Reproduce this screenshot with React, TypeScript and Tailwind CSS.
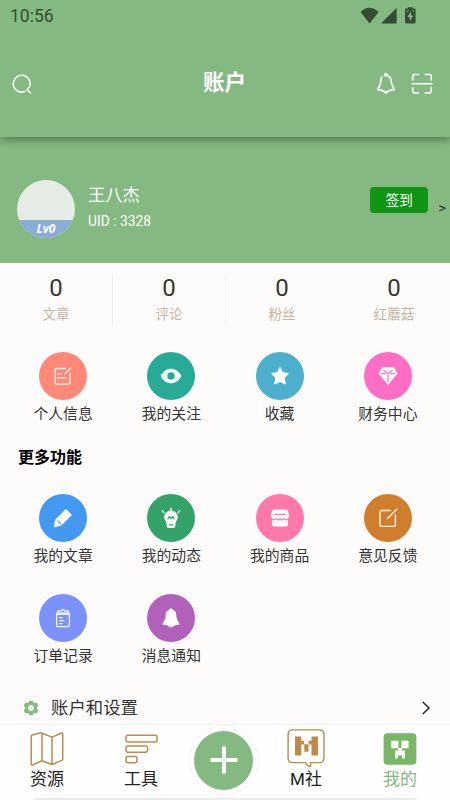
import clsx from "clsx";
import type { ReactNode } from "react";

interface ShortcutType {
  label: string;
  color: string;
  icon: ReactNode;
}

const SearchIcon = () => (
  <svg width="20" height="20" viewBox="0 0 20 20" fill="none" stroke="#fff" strokeWidth="1.5">
    <path d="M13.6 17.1A8.4 8.4 0 1 1 17.3 13.2L15 15.7L19 19.2" strokeLinejoin="round" />
  </svg>
);

const BellIcon = () => (
  <svg width="18" height="23" viewBox="0 0 18 23" fill="none" stroke="#fff" strokeWidth="1.6" strokeLinecap="round">
    <path d="M4.8 4.6C3.8 6.3 3.9 9 3.5 11.3C3 13.8 1.2 14.6 1 17.6C3.5 17.6 5 18.3 5.6 18.8C7.5 20 10.5 20 12.4 18.8C13 18.3 14.5 17.6 17 17.6C16.8 14.6 15 13.8 14.5 11.3C13.9 8 14.6 5.4 11.1 4" />
    <path d="M7.4 3.6C6.4 .4 11.4 .4 10.6 3.6ZM7.2 20.1C8 22.3 10 22.3 10.8 20.1Z" fill="#fff" strokeWidth="1" />
  </svg>
);

const ScanIcon = () => (
  <svg width="22" height="22" viewBox="0 0 22 22" fill="none" stroke="#fff" strokeWidth="1.6" strokeLinecap="round">
    <path d="M1.7 7V3.5Q1.7 1.5 3.7 1.5H7.5M14.3 1.5H18.2Q20.2 1.5 20.2 3.5V7M1.7 14.5V18Q1.7 20 3.7 20H7.5M14.3 20H18.2Q20.2 20 20.2 18V14.5M1.2 10.8H20.8" />
  </svg>
);

const StatusIcons = () => (
  <svg width="56" height="17" viewBox="0 0 56 17" fill="#344d31">
    <path d="M.5 5Q9.5-3.5 18.7 5L9.6 16.4Z" />
    <path d="M36.6 1V16.6H21Z" />
    <path
      fillRule="evenodd"
      d="M47.8 1.6V.2H52.9V1.6H54.2Q55.6 1.6 55.6 3V15Q55.6 16.6 54 16.6H46.6Q45 16.6 45 15V3Q45 1.6 46.4 1.6ZM51 4.3L47.4 10H49.7V14.2L53.2 8.5H51Z"
    />
    <path d="M46.6 4.4L48.6 3.6M52.2 3.6L54 4.4" stroke="#85b982" strokeWidth="1" />
  </svg>
);

const NoteIcon = () => (
  <svg width="20" height="20" viewBox="0 0 20 20" fill="none" stroke="#fff" strokeWidth="1.3" strokeLinecap="round" strokeLinejoin="round" strokeOpacity=".9">
    <path d="M12.5 2.5H3.6Q2 2.5 2 4.1V16.5Q2 18.1 3.6 18.1H15.4Q17 18.1 17 16.5V7.3M11.9 7.7L18 1.6M4.8 7.7H8.8M4.8 11.9H13" />
  </svg>
);

const EyeIcon = () => (
  <svg width="22" height="16" viewBox="0 0 22 16">
    <path d="M.6 8C3.2 3.2 6.8.7 11 .7S18.8 3.2 21.4 8C18.8 12.8 15.2 15.3 11 15.3S3.2 12.8.6 8Z" fill="#fff" />
    <circle cx="11" cy="8" r="3.7" fill="#28ab96" />
  </svg>
);

const StarIcon = () => (
  <svg width="20" height="20" viewBox="0 0 20 20" fill="#fff" stroke="#fff" strokeWidth="1" strokeLinejoin="round">
    <path d="M10 1.3L12.6 6.7L18.6 7.5L14.3 11.8L15.3 18L10 15.4L4.7 18L5.7 11.8L1.4 7.5L7.4 6.7Z" />
  </svg>
);

const DiamondIcon = () => (
  <svg width="20" height="20" viewBox="0 0 20 20">
    <path d="M4.2 1.7H15.8L19 7.4L10 18.4L1 7.4Z" fill="#fff" stroke="#fff" strokeWidth=".8" strokeLinejoin="round" />
    <path d="M3.5 7.6H7.3M12.7 7.6H16.5M5.8 4.4L10 7.5L14.2 4.4M10 7.5V15.7" fill="none" stroke="#ff6ec4" strokeWidth="1.2" strokeLinecap="round" />
  </svg>
);

const PencilIcon = () => (
  <svg width="20" height="20" viewBox="0 0 20 20">
    <path d="M12.9 1.4L18.5 6.9L8.5 16.9L1.3 19L2.5 11.8Z" fill="#fff" stroke="#fff" strokeWidth=".8" strokeLinejoin="round" />
    <path d="M4.4 12.6L7.8 15.8" stroke="#4398f0" strokeWidth="1.2" />
  </svg>
);

const BulbIcon = () => (
  <svg width="20" height="22" viewBox="0 0 20 22">
    <path d="M10 3.6A6.8 6.8 0 0 1 16.8 10.2C16.8 13 14.7 14.3 14.4 16.5V18.8Q14.4 21 12 21H8Q5.6 21 5.6 18.8V16.5C5.3 14.3 3.2 13 3.2 10.2A6.8 6.8 0 0 1 10 3.6Z" fill="#fff" />
    <path d="M10 1.3V3.6M1.4 3.8L3 5.8M18.6 3.8L17 5.8" stroke="#fff" strokeWidth="1.3" strokeLinecap="round" />
    <path d="M7 11.8L8.3 9.5L10 11.4L11.7 9.5L13 11.8M8.3 17.9H11.7" fill="none" stroke="#33a36a" strokeWidth="1.3" strokeLinejoin="round" strokeLinecap="round" />
  </svg>
);

const ShopIcon = () => (
  <svg width="20" height="18" viewBox="0 0 20 18">
    <path d="M3.8.5H16.2Q17.5.5 18 2L19 6.3C19.3 9 17.4 10.2 15.6 10.2L14 9L12 10.2L10 9L8 10.2L6 9L4.4 10.2C2.6 10.2.7 9 1 6.3L2 2Q2.5.5 3.8.5Z" fill="#fff" />
    <path d="M2 11.3L4.3 11.6L6.1 10.6L8 11.7L10 10.6L12 11.7L13.9 10.6L15.7 11.6L18 11.3V15.4Q18 17.5 15.9 17.5H4.1Q2 17.5 2 15.4Z" fill="#fff" />
    <path d="M4.8 5.6H15.2" stroke="#ff78aa" strokeWidth="1.4" strokeLinecap="round" />
  </svg>
);

const FeedbackIcon = () => (
  <svg width="20" height="20" viewBox="0 0 20 20" fill="none" stroke="#fff" strokeWidth="1.4" strokeLinecap="round" strokeLinejoin="round" strokeOpacity=".9">
    <path d="M12.3 2.5H3.6Q2 2.5 2 4.1V16.8Q2 18.4 3.6 18.4H15.8Q17.4 18.4 17.4 16.8V6.8M9.5 10.5L18.8 1.2" />
  </svg>
);

const OrderIcon = () => (
  <svg width="16" height="20" viewBox="0 0 16 20" fill="none" stroke="#fff" strokeWidth="1.3" strokeLinecap="round" strokeLinejoin="round" strokeOpacity=".9">
    <path d="M2.6 4.8H13.4Q14.4 4.8 14.4 6V17Q14.4 18.7 12.7 18.7H3.3Q1.6 18.7 1.6 17V6Q1.6 4.8 2.6 4.8ZM1.7 6.4H14.3M2.9 2.8H6.3Q8 .2 9.7 2.8H13.1V4.8M2.9 2.8V4.8M4.7 9.6H7M4.7 12.6H9M4.7 15.6H7" />
  </svg>
);

const NoticeIcon = () => (
  <svg width="18" height="20" viewBox="0 0 18 20">
    <path d="M9 .4C10 .4 10.8 1 11 1.9C14.5 3 14.2 6 14.5 9C14.8 13 17 13.2 17.5 16.6C15.6 16.8 13.5 17.2 12 17.8C11 20.1 7 20.1 6 17.8C4.5 17.2 2.4 16.8.5 16.6C1 13.2 3.2 13 3.5 9C3.8 6 3.5 3 7 1.9C7.2 1 8 .4 9 .4Z" fill="#fff" />
    <path d="M8.2 18.2H9.8" stroke="#b160bb" strokeWidth=".8" />
  </svg>
);

const GearIcon = () => (
  <svg width="16" height="16" viewBox="0 0 16 16">
    <path
      d="M6.2.7H9.8L10.6 2.9L13.4 2.4L15.2 5.5L13.7 8L15.2 10.5L13.4 13.6L10.6 13.1L9.8 15.3H6.2L5.4 13.1L2.6 13.6L.8 10.5L2.3 8L.8 5.5L2.6 2.4L5.4 2.9Z"
      fill="#85b982"
    />
    <circle cx="8" cy="8" r="2.9" fill="#fefcfb" />
  </svg>
);

const MapIcon = () => (
  <svg width="34" height="34" viewBox="0 0 34 34" fill="none" stroke="#bb8b4b" strokeWidth="1.5" strokeLinejoin="round">
    <path d="M1.2 4.2Q1.2 3.4 2 3.1L11 .8L12 1.2L22 5.1L31.5 1Q32.7 .6 32.7 1.8V27.9L22 32.5L12 28.8L2.4 33Q1.2 33.4 1.2 32.2ZM12 1.2V28.8M22 5.1V32.5" />
  </svg>
);

const ToolsIcon = () => (
  <svg width="33" height="30" viewBox="0 0 33 30" fill="none" stroke="#bb8b4b" strokeWidth="1.5">
    <rect x="1" y="1.3" width="31" height="6.6" rx="2" />
    <rect x="1" y="12" width="21.6" height="6.2" rx="2" />
    <rect x="1" y="22.6" width="11" height="6.1" rx="2" />
  </svg>
);

const ClubIcon = () => (
  <svg width="38" height="39" viewBox="0 0 38 39">
    <path
      d="M5.7.9H32.4Q37 .9 37 5.5V29Q37 33.6 32.4 33.6H23.6V37.4Q21.5 38 18.5 33.6H5.7Q1.1 33.6 1.1 29V5.5Q1.1 .9 5.7 .9Z"
      fill="none"
      stroke="#bb8b4b"
      strokeWidth="1.4"
    />
    <path d="M8 7.5H14.3V11.8H17.2V15.2H21.6V11.8H24.5V7.5H31V26.5H24.5V15.5H21.5V22.8H17.3V15.5H14.3V26.5H8Z" fill="#bb8b4b" />
  </svg>
);

const MineIcon = () => (
  <svg width="34" height="32" viewBox="0 0 34 32">
    <rect x=".6" y=".3" width="32.8" height="31.4" rx="4" fill="#79b666" />
    <path d="M8.2 7.8H15.4V15H18.4V7.8H25.6V15.2H18.8V17.6H22V25.5H19.2V22.6H14.8V25.5H12V17.6H15.2V15.2H8.2Z" fill="#fff" />
  </svg>
);

const stats = ["文章", "评论", "粉丝", "红蘑菇"];

const mainShortcuts: ShortcutType[] = [
  { label: "个人信息", color: "bg-[#ff8879]", icon: <NoteIcon /> },
  { label: "我的关注", color: "bg-[#28ab96]", icon: <EyeIcon /> },
  { label: "收藏", color: "bg-[#4db1cd]", icon: <StarIcon /> },
  { label: "财务中心", color: "bg-[#ff6ec4]", icon: <DiamondIcon /> },
];

const moreShortcuts: ShortcutType[] = [
  { label: "我的文章", color: "bg-[#4398f0]", icon: <PencilIcon /> },
  { label: "我的动态", color: "bg-[#33a36a]", icon: <BulbIcon /> },
  { label: "我的商品", color: "bg-[#ff78aa]", icon: <ShopIcon /> },
  { label: "意见反馈", color: "bg-[#cf7f2b]", icon: <FeedbackIcon /> },
  { label: "订单记录", color: "bg-[#7b91fe]", icon: <OrderIcon /> },
  { label: "消息通知", color: "bg-[#b160bb]", icon: <NoticeIcon /> },
];

const ShortcutGrid = ({ items }: { items: ShortcutType[] }) => (
  <div className="grid grid-cols-4 gap-y-[27px] pr-2 pl-[9px]">
    {items.map((item) => (
      <div key={item.label} className="flex h-[73px] flex-col items-center">
        <div className={clsx("flex size-12 shrink-0 items-center justify-center rounded-full", item.color)}>
          {item.icon}
        </div>
        <span className="mt-0.5 text-[14.8px] leading-6 text-[#333]">{item.label}</span>
      </div>
    ))}
  </div>
);

interface NavItemProps {
  label: string;
  icon: ReactNode;
  active?: boolean;
}

const NavItem = ({ label, icon, active = false }: NavItemProps) => (
  <div className="flex w-[94px] flex-col items-center">
    <div className="flex h-[47px] items-center justify-center">{icon}</div>
    <span className={clsx("-mt-[5px] text-[17px] leading-6", active ? "text-[#85b982]" : "text-[#222]")}>
      {label}
    </span>
  </div>
);

const App = () => {
  return (
    <div className="flex h-[800px] w-[450px] flex-col overflow-hidden bg-[#fefcfb] font-[Roboto,'Noto_Sans_CJK_SC',sans-serif]">
      {/* Header */}
      <header className="z-10 h-[137px] shrink-0 bg-[#85b982] shadow-[0_3px_8px_rgba(0,0,0,0.35)]">
        <div className="flex h-8 items-center justify-between pr-[34px] pl-[10px]">
          <span className="text-[17.5px] leading-8 text-[#344d31]">10:56</span>
          <div className="-mt-[2px]">
            <StatusIcons />
          </div>
        </div>
        <div className="flex h-[102px] items-center pt-px pr-[17px] pl-3">
          <div className="w-[60px]">
            <SearchIcon />
          </div>
          <h1 className="flex-1 text-center text-[21.5px] font-bold text-white">账户</h1>
          <div className="flex items-center gap-4">
            <BellIcon />
            <ScanIcon />
          </div>
        </div>
      </header>

      {/* Profile */}
      <section className="flex h-[126px] shrink-0 items-center bg-[#85b982] pt-[17px] pr-1 pl-[17px] text-white">
        <div className="flex size-[58px] flex-col justify-end overflow-hidden rounded-full bg-[#e5ebe5]">
          <div className="h-[18px] bg-[#8aadd7] text-center font-['Open_Sans'] text-xs leading-[17px] font-bold italic">
            Lv0
          </div>
        </div>
        <div className="mb-[3px] ml-[13px] flex flex-1 flex-col">
          <span className="text-[17.3px] leading-7">王八杰</span>
          <span className="text-[13.8px] leading-6">UID : 3328</span>
        </div>
        <button className="mb-[17px] h-[26px] w-[58px] rounded bg-[#119515] text-[13.5px] leading-[26px]">签到</button>
        <span className="ml-[10px] text-[15px] text-[#333]">&gt;</span>
      </section>

      {/* Stats */}
      <section className="flex h-[89px] shrink-0 pt-[11px]">
        {stats.map((label, index) => (
          <div
            key={label}
            className={clsx(
              "flex h-[52px] flex-1 flex-col items-center",
              index < 2 && "border-r border-[#f5f3f2]",
            )}
          >
            <span className="text-[24px] leading-7 text-[#3a3632]">0</span>
            <span className="text-[13.6px] leading-6 text-[#c4b5a3]">{label}</span>
          </div>
        ))}
      </section>

      <ShortcutGrid items={mainShortcuts} />
      <h2 className="mt-[21px] mb-6 pl-[18px] text-[16px] leading-6 font-bold text-black">更多功能</h2>
      <ShortcutGrid items={moreShortcuts} />

      {/* Settings */}
      <div className="mt-[27px] flex h-7 shrink-0 items-center pr-5 pl-[23px]">
        <GearIcon />
        <span className="ml-3 flex-1 text-[17.4px] leading-7 text-[#333]">账户和设置</span>
        <svg width="8" height="14" viewBox="0 0 8 14" fill="none" stroke="#222" strokeWidth="1.5">
          <path d="M.8 1L7 7L.8 13" />
        </svg>
      </div>

      {/* Bottom navigation */}
      <nav className="mt-auto h-[76px] shrink-0 border-t border-[#f3f2f3] bg-[#fefefe]">
        <div className="flex h-[73px] pr-[3px]">
          <NavItem label="资源" icon={<MapIcon />} />
          <NavItem label="工具" icon={<ToolsIcon />} />
          <div className="flex flex-1 justify-center">
            <div className="flex size-[70px] shrink-0 items-center justify-center rounded-full border border-[#f5f4f5] bg-white">
              <div className="flex size-[59px] items-center justify-center rounded-full bg-[#85b982]">
                <svg width="28" height="28" viewBox="0 0 28 28" stroke="#fff" strokeWidth="4" strokeLinecap="round">
                  <path d="M14 2V26M2 14H26" />
                </svg>
              </div>
            </div>
          </div>
          <NavItem label="M社" icon={<ClubIcon />} />
          <NavItem label="我的" icon={<MineIcon />} active />
        </div>
        <div className="mx-[33px] h-0.5 rounded-t bg-[#ececec]" />
      </nav>
    </div>
  );
};

export default App;
